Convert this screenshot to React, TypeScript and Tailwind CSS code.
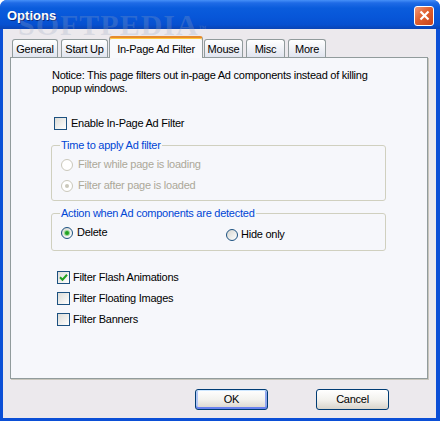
import React from "react";

const tabs = [
  { label: "General", cls: "ml-[2px] w-[46px]", active: false },
  { label: "Start Up", cls: "ml-[3px] w-[47px]", active: false },
  { label: "In-Page Ad Filter", cls: "ml-[1px] w-[94px]", active: true },
  { label: "Mouse", cls: "ml-[1px] w-[39px]", active: false },
  { label: "Misc", cls: "ml-[3px] w-[39px]", active: false },
  { label: "More", cls: "ml-[3px] w-[38px]", active: false },
];

function CheckBox({ checked }: { checked?: boolean }) {
  return (
    <span className="flex h-[13px] w-[13px] shrink-0 items-center justify-center border border-[#1c5180] bg-gradient-to-br from-[#dcdcd7] to-white">
      {checked && (
        <svg width="9" height="9" viewBox="0 0 9 9">
          <path d="M1 4.2 L3.5 6.7 L8 1.8" stroke="#21a121" strokeWidth="2" fill="none" />
        </svg>
      )}
    </span>
  );
}

function Radio({ checked, disabled }: { checked?: boolean; disabled?: boolean }) {
  return (
    <span
      className={
        disabled
          ? "flex h-[12px] w-[12px] shrink-0 items-center justify-center rounded-full border border-[#cac8bb] bg-white"
          : "flex h-[12px] w-[12px] shrink-0 items-center justify-center rounded-full border border-[#1c5180] bg-gradient-to-br from-[#d6d6d0] to-white"
      }
    >
      {checked && (
        <span
          className={
            disabled
              ? "h-[4px] w-[4px] rounded-full bg-[#cac8bb]"
              : "h-[4px] w-[4px] rounded-full bg-[#21a121] shadow-[0_0_0_1px_#94d894]"
          }
        />
      )}
    </span>
  );
}

export default function App() {
  return (
    <div className="h-[421px] w-[440px] bg-white font-['Liberation_Sans',Arial,sans-serif] text-[11px] tracking-[-0.25px] text-black">
      <div className="relative flex h-full flex-col overflow-hidden rounded-t-[7px] bg-[#0b4fd6]">
        {/* title bar */}
        <div className="flex h-[29px] shrink-0 items-center justify-between bg-[linear-gradient(to_bottom,#4690f8_0%,#1f6be6_10%,#0a5cdc_28%,#0756d8_60%,#0650d0_85%,#0a44b4_100%)] pl-[7px] pr-[6px] pt-[2px]">
          <span className="text-[13px] font-bold tracking-normal text-white [text-shadow:1px_1px_0_#0a2a80]">Options</span>
          <span className="flex h-[20px] w-[20px] items-center justify-center rounded-[3px] border border-white bg-[linear-gradient(135deg,#f29a7c_0%,#e0602f_45%,#c9431a_100%)]">
            <svg width="11" height="11" viewBox="0 0 11 11">
              <path d="M1.5 1.5 L9.5 9.5 M9.5 1.5 L1.5 9.5" stroke="white" strokeWidth="2.2" />
            </svg>
          </span>
        </div>

        {/* body */}
        <div className="ml-[3px] mr-[4px] mb-[3px] flex flex-1 flex-col bg-[#ece9ed] pl-[7px] pr-[8px] pt-[7px]">
          <div className="relative z-10 flex h-[21px] items-end">
            {tabs.map((t) =>
              t.active ? (
                <div
                  key={t.label}
                  className={`${t.cls} -mb-[1px] flex h-[22px] items-start justify-center rounded-t-[3px] border-x border-t-2 border-x-[#919b9c] border-t-[#e68b2c] bg-[#f8f9fc] pt-[3px] shadow-[inset_0_1px_0_#ffc73c]`}
                >
                  {t.label}
                </div>
              ) : (
                <div
                  key={t.label}
                  className={`${t.cls} flex h-[18px] items-center justify-center rounded-t-[3px] border border-b-0 border-[#919b9c] bg-gradient-to-b from-white to-[#e1e5ef] pt-[1px]`}
                >
                  {t.label}
                </div>
              )
            )}
          </div>

          <div className="h-[322px] border border-[#919b9c] bg-[#f6f7fb] pl-[40px] pt-[11px] shadow-[1px_1px_0_#c8c6bc]">
            <p className="ml-[1px] leading-[13px]">
              Notice: This page filters out in-page Ad components instead of killing
              <br />
              popup windows.
            </p>

            <div className="ml-[3px] mt-[22px] flex h-[13px] items-center gap-[4px]">
              <CheckBox />
              <span>Enable In-Page Ad Filter</span>
            </div>

            <fieldset className="mt-[9px] w-[335px] rounded-[3px] border border-[#d0d0bf] px-[9px] pb-[8px]">
              <legend className="-ml-[1px] px-[1px] leading-[13px] text-[#0046d5]">Time to apply Ad filter</legend>
              <div className="mt-[6px] flex flex-col gap-[8px] text-[#aca899]">
                <div className="flex h-[13px] items-center gap-[5px]">
                  <Radio disabled />
                  <span>Filter while page is loading</span>
                </div>
                <div className="flex h-[13px] items-center gap-[5px]">
                  <Radio disabled checked />
                  <span>Filter after page is loaded</span>
                </div>
              </div>
            </fieldset>

            <fieldset className="mt-[6px] w-[335px] rounded-[3px] border border-[#d0d0bf] px-[9px] pb-[9px]">
              <legend className="-ml-[1px] px-[1px] leading-[13px] text-[#0046d5]">Action when Ad components are detected</legend>
              <div className="mt-[6px] grid grid-cols-[165px_1fr]">
                <div className="flex h-[13px] items-center gap-[4px]">
                  <Radio checked />
                  <span>Delete</span>
                </div>
                <div className="mt-[2px] flex h-[13px] items-center gap-[3px]">
                  <Radio />
                  <span>Hide only</span>
                </div>
              </div>
            </fieldset>

            <div className="ml-[6px] mt-[20px] flex flex-col gap-[8px]">
              <div className="flex h-[13px] items-center gap-[3px]">
                <CheckBox checked />
                <span>Filter Flash Animations</span>
              </div>
              <div className="flex h-[13px] items-center gap-[3px]">
                <CheckBox />
                <span>Filter Floating Images</span>
              </div>
              <div className="flex h-[13px] items-center gap-[3px]">
                <CheckBox />
                <span>Filter Banners</span>
              </div>
            </div>
          </div>

          <div className="mt-[10px] flex justify-end gap-[48px] pr-[39px]">
            <button className="h-[21px] w-[73px] rounded-[3px] border border-[#003c74] bg-gradient-to-b from-white via-[#f3f2ee] to-[#d8d4cc] shadow-[inset_0_1px_0_#cee7ff,inset_0_-2px_0_#6982ee,inset_2px_0_0_#b2c7f5,inset_-2px_0_0_#8fa6ef]">
              OK
            </button>
            <button className="h-[21px] w-[73px] rounded-[3px] border border-[#003c74] bg-gradient-to-b from-white via-[#f3f2ee] to-[#d8d4cc]">
              Cancel
            </button>
          </div>
        </div>

        {/* watermark */}
        <div className="pointer-events-none absolute left-[18px] top-[13px] select-none font-['Liberation_Serif',serif] text-[30px] font-bold leading-[24px] tracking-[1px] text-[#9aa8c0]/25">
          SOFTPEDIA<sup className="text-[8px]">™</sup>
        </div>
      </div>
    </div>
  );
}
